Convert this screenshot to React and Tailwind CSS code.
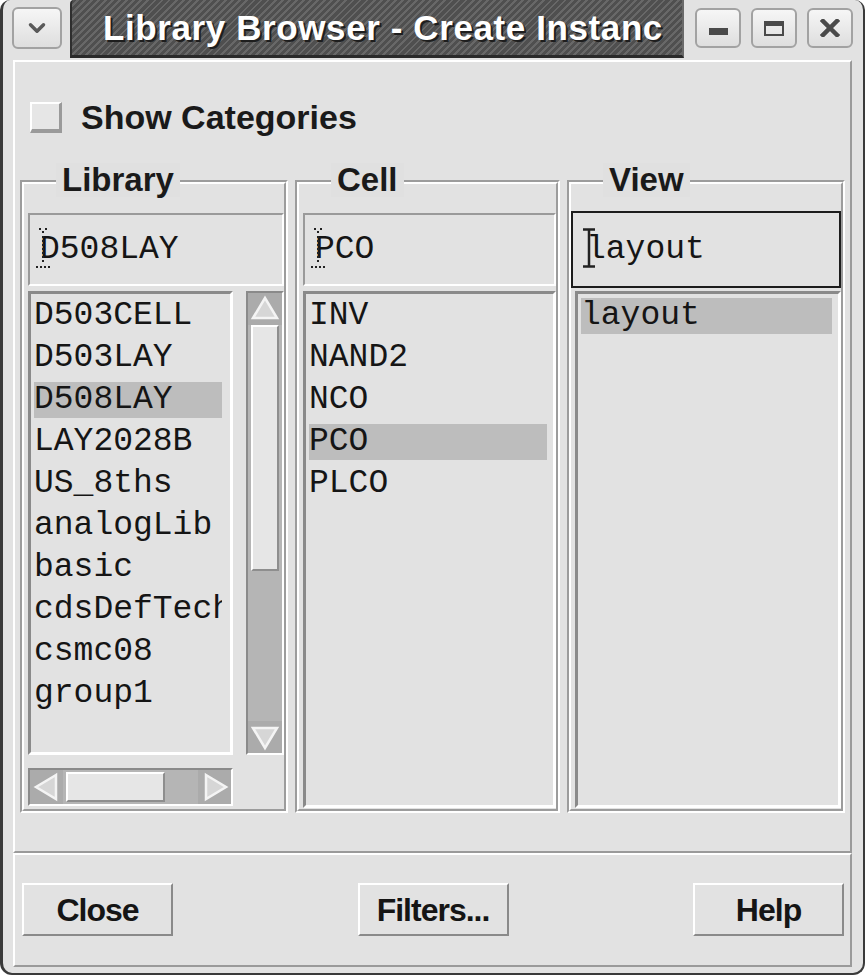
import React from 'react';
import clsx from 'clsx';
import { ChevronDown } from 'lucide-react';

const sans = "font-['Liberation_Sans',Arial,sans-serif]";
const mono = "font-['Liberation_Mono','Courier_New',monospace]";

const libraries = ['D503CELL', 'D503LAY', 'D508LAY', 'LAY2028B', 'US_8ths', 'analogLib', 'basic', 'cdsDefTech', 'csmc08', 'group1'];
const cells = ['INV', 'NAND2', 'NCO', 'PCO', 'PLCO'];

// ── Window chrome ─────────────────────────────────────────────
const TitleButton = ({ className, children }) => (
    <div className={clsx('flex items-center justify-center rounded-[6px] border-2 border-[#a2a2a2] bg-[linear-gradient(#f6f6f6,#dedede)]', className)}>
        {children}
    </div>
);

const TitleBar = () => (
    <div className="flex h-[58px] shrink-0">
        <div className="w-[67px] pt-[7px] pl-[9px]">
            <TitleButton className="w-[50px] h-[42px]">
                <ChevronDown className="w-[26px] h-[26px] text-[#5a5a5a]" strokeWidth={3.2} />
            </TitleButton>
        </div>
        <div className="flex-1 min-w-0 overflow-hidden rounded-tl-[4px] border-l-2 border-b-[3px] border-r-2 border-l-[#2e2e2e] border-b-[#2a2a2a] border-r-[#6a6a6a] bg-[repeating-linear-gradient(135deg,#4f4f4f_0px,#4f4f4f_3px,#686868_3px,#686868_5px)] pl-[31px]">
            <span className={clsx(sans, 'block whitespace-nowrap text-[35px] font-bold leading-[56px] tracking-[0.6px] text-white [text-shadow:2px_2px_0_#1e1e1e]')}>
                Library Browser - Create Instanc
            </span>
        </div>
        <div className="w-[179px] flex gap-[10px] pt-[8px] pl-[11px]">
            <TitleButton className="w-[46px] h-[40px]">
                <div className="mt-[7px] w-[19px] h-[7px] bg-[#4a4a4a]" />
            </TitleButton>
            <TitleButton className="w-[46px] h-[40px]">
                <div className="w-[20px] h-[15px] border-2 border-t-[5px] border-[#4a4a4a]" />
            </TitleButton>
            <TitleButton className="w-[46px] h-[40px]">
                <svg width="20" height="18" viewBox="0 0 20 18">
                    <path d="M3 2 L17 16 M17 2 L3 16" stroke="#4a4a4a" strokeWidth="4.5" strokeLinecap="square" />
                </svg>
            </TitleButton>
        </div>
    </div>
);

// ── Motif-ish widgets ─────────────────────────────────────────
const GroupBox = ({ label, className, children }) => (
    <div className={clsx('relative border-2 border-t-[#9c9c9c] border-l-[#9c9c9c] border-r-white border-b-white', className)}>
        <div className="h-full border-2 border-t-white border-l-white border-r-[#9c9c9c] border-b-[#9c9c9c]">
            {children}
        </div>
        <span className={clsx(sans, 'absolute -top-[19px] left-[34px] bg-[#e0e0e0] px-[6px] text-[33px] font-bold leading-[34px] text-[#1a1a1a]')}>
            {label}
        </span>
    </div>
);

const DottedCaret = () => (
    <svg className="absolute left-[6px] top-[13px]" width="14" height="42" viewBox="0 0 14 42">
        <g fill="#222">
            <rect x="3" y="0" width="2" height="2" />
            <rect x="9" y="0" width="2" height="2" />
            <rect x="6" y="3" width="2" height="2" />
            {[8, 12, 16, 20, 24, 28, 32].map(y => <rect key={y} x="6" y={y} width="2" height="2" />)}
            {[0, 4, 8, 12].map(x => <rect key={x} x={x} y="38" width="2" height="2" />)}
        </g>
    </svg>
);

const Field = ({ text, caret }) => (
    <div className={clsx(mono, 'relative flex h-[73px] items-center border-2 border-t-[#9a9a9a] border-l-[#9a9a9a] border-r-white border-b-white pl-[10px] text-[33px] text-[#151515]')}>
        {caret && <DottedCaret />}
        {text}
    </div>
);

const Row = ({ text, selected, right = 'mr-[6px]' }) => (
    <div className={clsx('mt-[3px] mb-[3px] ml-[3px] h-[36px] shrink-0 overflow-hidden whitespace-nowrap pt-[1px] leading-[34px]', right, selected && 'bg-[#bdbdbd]')}>
        {text}
    </div>
);

const ListBox = ({ className, children }) => (
    <div className={clsx(mono, 'flex flex-col overflow-hidden border-[3px] border-t-[#8a8a8a] border-l-[#8a8a8a] border-r-white border-b-white pt-[1px] text-[33px] text-[#151515]', className)}>
        {children}
    </div>
);

const Arrow = ({ dir, className }) => {
    const pts = {
        up: '3,24 15,4 27,24',
        down: '3,6 15,26 27,6',
        left: '24,3 4,15 24,27',
        right: '6,3 26,15 6,27',
    }[dir];
    return (
        <div className={clsx('flex items-center justify-center bg-[#ababab]', className)}>
            <svg width="30" height="30" viewBox="0 0 30 30">
                <polygon points={pts} fill="#d6d6d6" stroke="#f4f4f4" strokeWidth="2.5" strokeLinejoin="miter" />
            </svg>
        </div>
    );
};

const Thumb = ({ className }) => (
    <div className={clsx('bg-[#e6e6e6] border-2 border-t-white border-l-white border-r-[#8e8e8e] border-b-[#8e8e8e]', className)} />
);

const VScroll = () => (
    <div className="ml-[13px] flex w-[38px] flex-col border-2 border-t-[#8a8a8a] border-l-[#8a8a8a] border-r-white border-b-white bg-[#b5b5b5]">
        <Arrow dir="up" className="h-[32px]" />
        <Thumb className="mx-[3px] h-[246px]" />
        <div className="flex-1" />
        <Arrow dir="down" className="h-[32px]" />
    </div>
);

const HScroll = () => (
    <div className="mt-[13px] flex h-[38px] w-[205px] border-2 border-t-[#8a8a8a] border-l-[#8a8a8a] border-r-white border-b-white bg-[#b5b5b5]">
        <Arrow dir="left" className="w-[33px]" />
        <Thumb className="ml-[3px] my-[2px] w-[99px]" />
        <div className="flex-1" />
        <Arrow dir="right" className="w-[33px]" />
    </div>
);

const Button = ({ children }) => (
    <div className={clsx(sans, 'flex h-[53px] w-[151px] items-center justify-center border-2 border-t-white border-l-white border-r-[#8a8a8a] border-b-[#8a8a8a] bg-[#e2e2e2] text-[32px] font-bold tracking-[-1px] text-[#151515]')}>
        {children}
    </div>
);

export default function App() {
    return (
        <div className="flex h-[975px] w-[865px] flex-col overflow-hidden rounded-t-[10px] rounded-b-[12px] border-l-[3px] border-r-[2px] border-b-[2px] border-[#3a3a3a] bg-[#e2e2e2]">
            <TitleBar />

            <div className="flex flex-1 flex-col pt-[2px] pl-[10px] pr-[11px] pb-[6px]">
                {/* main panel */}
                <div className="flex h-[793px] flex-col border-2 border-t-white border-l-white border-r-[#9a9a9a] border-b-[#9a9a9a]">
                    <div className="mt-[38px] ml-[15px] flex items-center gap-[19px]">
                        <div className="h-[31px] w-[32px] border-2 border-b-[4px] border-r-[3px] border-t-white border-l-white border-r-[#9a9a9a] border-b-[#9a9a9a] bg-[#e6e6e6]" />
                        <span className={clsx(sans, 'text-[34px] font-bold leading-[34px] text-[#1a1a1a]')}>Show Categories</span>
                    </div>

                    <div className="mt-[46px] flex gap-[7px] px-[5px]">
                        <GroupBox label="Library" className="h-[633px] w-[268px]">
                            <div className="pt-[29px] pl-[4px]">
                                <Field text="D508LAY" caret />
                                <div className="mt-[5px] flex">
                                    <ListBox className="h-[464px] w-[205px]">
                                        {libraries.map(l => (
                                            <Row key={l} text={l} selected={l === 'D508LAY'} right="mr-[8px]" />
                                        ))}
                                    </ListBox>
                                    <VScroll />
                                </div>
                                <HScroll />
                            </div>
                        </GroupBox>

                        <GroupBox label="Cell" className="h-[633px] w-[265px]">
                            <div className="flex h-full flex-col pt-[29px] pl-[4px] pb-[1px]">
                                <Field text="PCO" caret />
                                <ListBox className="mt-[5px] flex-1">
                                    {cells.map(c => (
                                        <Row key={c} text={c} selected={c === 'PCO'} />
                                    ))}
                                </ListBox>
                            </div>
                        </GroupBox>

                        <GroupBox label="View" className="h-[633px] flex-1">
                            <div className="flex h-full flex-col pt-[27px] pl-[4px] pb-[1px]">
                                <div className={clsx(mono, 'relative -ml-[4px] flex h-[77px] items-center border-2 border-[#1c1c1c] pl-[13px] text-[33px] text-[#151515]')}>
                                    <svg className="absolute left-[9px] top-[15px]" width="14" height="40" viewBox="0 0 14 40">
                                        <path d="M1 1.5 H13 M7 1.5 V38.5 M1 38.5 H13" stroke="#222" strokeWidth="2.5" fill="none" />
                                    </svg>
                                    layout
                                </div>
                                <ListBox className="mt-[3px] flex-1">
                                    <Row text="layout" selected />
                                </ListBox>
                            </div>
                        </GroupBox>
                    </div>
                </div>

                {/* button panel */}
                <div className="flex flex-1 items-start justify-between border-2 border-t-white border-l-white border-r-[#9a9a9a] border-b-[#9a9a9a] pt-[28px] pl-[7px] pr-[6px]">
                    <Button>Close</Button>
                    <Button>Filters...</Button>
                    <Button>Help</Button>
                </div>
            </div>
        </div>
    );
}
